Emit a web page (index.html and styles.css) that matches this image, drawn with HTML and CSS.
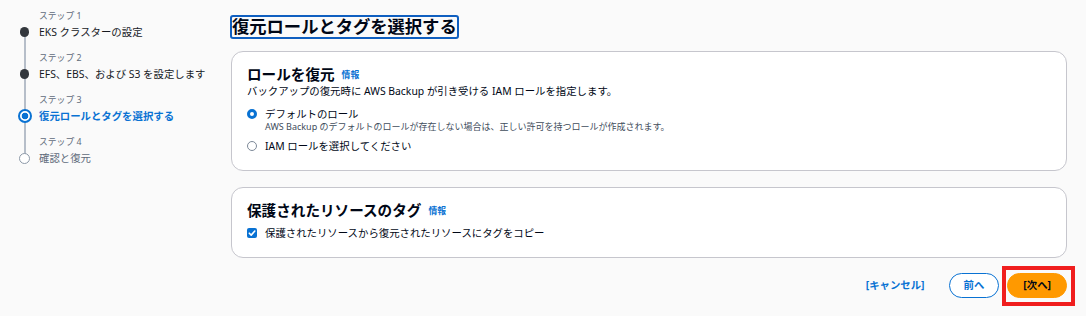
FILE: index.html
```html
<!DOCTYPE html>
<html lang="ja">
<head>
<meta charset="utf-8">
<title>復元ロールとタグを選択する</title>
<link rel="stylesheet" href="styles.css">
</head>
<body>
<div class="page">
  <nav class="steps">
    <div class="step">
      <span class="step-label">ステップ 1</span>
      <span class="marker marker-done"></span>
      <span class="step-title">EKS クラスターの設定</span>
    </div>
    <div class="step">
      <span class="step-label">ステップ 2</span>
      <span class="marker marker-done"></span>
      <span class="step-title">EFS、EBS、および S3 を設定します</span>
    </div>
    <div class="step">
      <span class="step-label">ステップ 3</span>
      <span class="marker marker-active"></span>
      <span class="step-title step-title-active">復元ロールとタグを選択する</span>
    </div>
    <div class="step">
      <span class="step-label">ステップ 4</span>
      <span class="marker marker-todo"></span>
      <span class="step-title step-title-todo">確認と復元</span>
    </div>
  </nav>

  <main class="main">
    <h1 class="heading"><span class="heading-box">復元ロールとタグを選択する</span></h1>

    <section class="card">
      <h2 class="card-title"><span>ロールを復元</span><a class="info" href="#">情報</a></h2>
      <p class="card-desc">バックアップの復元時に AWS Backup が引き受ける IAM ロールを指定します。</p>
      <div class="options">
        <label class="option">
          <span class="radio radio-on"></span>
          <span class="option-text">
            <span class="option-label">デフォルトのロール</span>
            <span class="option-sub">AWS Backup のデフォルトのロールが存在しない場合は、正しい許可を持つロールが作成されます。</span>
          </span>
        </label>
        <label class="option option-second">
          <span class="radio"></span>
          <span class="option-text">
            <span class="option-label">IAM ロールを選択してください</span>
          </span>
        </label>
      </div>
    </section>

    <section class="card card-second">
      <h2 class="card-title"><span>保護されたリソースのタグ</span><a class="info" href="#">情報</a></h2>
      <label class="option option-check">
        <span class="checkbox">
          <svg viewBox="0 0 10 10" width="10" height="10"><path d="M2.3 5.2 L4.2 7.1 L7.8 3" fill="none" stroke="#fff" stroke-width="1.6" stroke-linecap="round" stroke-linejoin="round"/></svg>
        </span>
        <span class="option-text">
          <span class="option-label">保護されたリソースから復元されたリソースにタグをコピー</span>
        </span>
      </label>
    </section>

    <div class="actions">
      <button class="btn btn-link">[キャンセル]</button>
      <button class="btn btn-normal">前へ</button>
      <span class="highlight-wrap"><button class="btn btn-primary">[次へ]</button></span>
    </div>
  </main>
</div>
</body>
</html>
```

FILE: styles.css
```css
* { box-sizing: border-box; }

body {
  margin: 0;
  background: #fafafa;
  color: #000716;
  font-family: "Noto Sans", "Noto Sans CJK JP", sans-serif;
}

.page {
  display: flex;
  height: 316px;
}

/* ---------- steps navigation ---------- */
.steps {
  width: 231px;
  flex: none;
  padding-top: 8px;
}

.step {
  position: relative;
  display: grid;
  grid-template-columns: 39px 1fr;
  grid-template-rows: 16px 16px;
  height: 42px;
}

.step:not(:last-child)::after {
  content: "";
  position: absolute;
  left: 23.5px;
  top: 24px;
  width: 2px;
  height: 42px;
  background: #b6bec9;
}

.step-label {
  grid-column: 2;
  grid-row: 1;
  font-size: 8.8px;
  line-height: 16px;
  color: #5f6b7a;
}

.step-title {
  grid-column: 2;
  grid-row: 2;
  font-size: 10.4px;
  line-height: 16px;
  color: #16191f;
  white-space: nowrap;
}

.step-title-active {
  color: #0972d3;
  font-weight: 700;
}

.step-title-todo {
  color: #5f6b7a;
}

.marker {
  grid-column: 1;
  grid-row: 2;
  align-self: center;
  justify-self: center;
  margin-left: 10px;
  position: relative;
  z-index: 1;
  border-radius: 50%;
}

.marker-done {
  width: 9.5px;
  height: 9.5px;
  background: #33373d;
}

.marker-active {
  width: 14px;
  height: 14px;
  border: 2px solid #0972d3;
  background: radial-gradient(circle, #0972d3 0 3.2px, #fff 3.6px);
}

.marker-todo {
  width: 11px;
  height: 11px;
  border: 1.5px solid #8d99a8;
  background: #fff;
}

/* ---------- main ---------- */
.main {
  width: 836px;
  flex: none;
}

.heading {
  margin: 15px 0 0;
  font-size: 17.3px;
  font-weight: 700;
  line-height: 20px;
}

.heading-box {
  display: inline-block;
  margin-left: -1px;
  padding: 0;
  border: 2px solid #0f5fc0;
  border-radius: 3px;
  color: #000716;
}

.card {
  margin-top: 12px;
  background: #fff;
  border: 1px solid #c6c6cd;
  border-radius: 12px;
  padding: 13px 15px 17px;
}

.card-second {
  margin-top: 16px;
}

.card-title {
  margin: 0;
  height: 18px;
  display: flex;
  align-items: center;
  gap: 7px;
  font-size: 14.6px;
  line-height: 18px;
  font-weight: 700;
  color: #000716;
}

.info {
  font-size: 8.8px;
  line-height: 12px;
  margin-top: 2px;
  font-weight: 700;
  color: #0972d3;
  text-decoration: none;
}

.card-desc {
  margin: 1px 0 0;
  font-size: 10.4px;
  line-height: 14px;
  color: #000716;
}

.options {
  margin-top: 9px;
}

.option {
  display: grid;
  grid-template-columns: 10px 1fr;
  column-gap: 8px;
  align-items: start;
}

.option-second {
  margin-top: 6px;
}

.option-check {
  margin-top: 7px;
}

.option-text {
  display: flex;
  flex-direction: column;
}

.option-label {
  font-size: 10.4px;
  line-height: 14px;
  color: #000716;
}

.option-sub {
  font-size: 9px;
  line-height: 12px;
  color: #414d5c;
}

.radio {
  width: 10px;
  height: 10px;
  margin-top: 2px;
  border-radius: 50%;
  border: 1px solid #7d8998;
  background: #fff;
}

.radio-on {
  border: 3px solid #0972d3;
}

.checkbox {
  width: 10px;
  height: 10px;
  margin-top: 2px;
  border-radius: 2px;
  background: #0972d3;
  display: flex;
}

/* ---------- actions ---------- */
.actions {
  margin-top: 15px;
  display: flex;
  justify-content: flex-end;
  align-items: center;
  gap: 8px;
}

.btn {
  height: 25px;
  padding: 0 15px;
  border-radius: 20px;
  font-family: inherit;
  font-size: 10.4px;
  font-weight: 700;
  line-height: 1;
  cursor: pointer;
  border: 1.5px solid transparent;
  background: transparent;
}

.btn-link {
  color: #0972d3;
  padding: 0 15px;
}

.btn-normal {
  background: #fff;
  border-color: #0972d3;
  color: #0972d3;
  padding: 0 14px;
}

.btn-primary {
  background: #ff9900;
  border-color: #ff9900;
  color: #000716;
  display: block;
}

.highlight-wrap {
  position: relative;
  display: inline-flex;
}

.highlight-wrap::after {
  content: "";
  position: absolute;
  left: -5px;
  right: -8px;
  top: -7px;
  bottom: -8px;
  border: 4px solid #f01e1e;
  pointer-events: none;
}
```
